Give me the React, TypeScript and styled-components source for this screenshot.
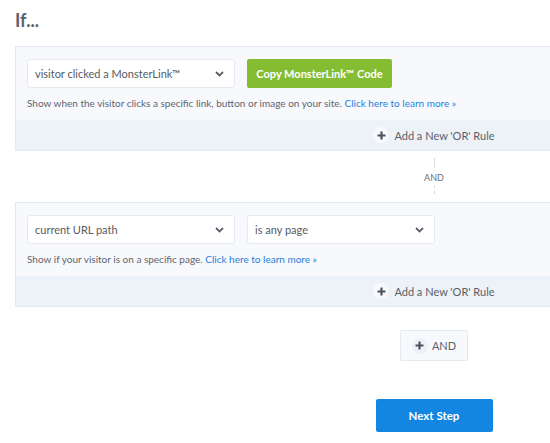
import { createGlobalStyle, styled } from 'styled-components';

const Global = createGlobalStyle`
  body {
    margin: 0;
    background: #fff;
    font-family: Lato, "Open Sans", sans-serif;
  }
`

const Viewport = styled.div`
  width: 100%;
  overflow: hidden;
`

const Page = styled.div`
  width: 838px;
  padding: 9px 0 10px 15px;
`

const Title = styled.h2`
  margin: 0 0 15px;
  font-size: 18px;
  line-height: 22px;
  font-weight: 700;
  color: #5b616b;
`

const Card = styled.div`
  border: 1px solid #e4e9f1;
  background: #f7f9fd;
`

const CardBody = styled.div`
  padding: 12px 11px 11px;
`

const Row = styled.div`
  display: flex;
  gap: 12px;
`

const Select = styled.div<{ $w: number }>`
  box-sizing: border-box;
  width: ${p => p.$w}px;
  height: 29px;
  background: #fff;
  border: 1px solid #e6eaf0;
  border-radius: 3px;
  display: flex;
  align-items: center;
  justify-content: space-between;
  padding: 0 10px 0 7px;
  font-size: 11px;
  color: #555b64;
`

const Chevron = () => (
  <svg width="9" height="6" viewBox="0 0 9 6">
    <path d="M1 1l3.5 3.5L8 1" stroke="#5b616b" strokeWidth="1.8" fill="none" />
  </svg>
)

const GreenButton = styled.button`
  height: 29px;
  width: 145px;
  border: 0;
  border-radius: 2px;
  background: #84bd32;
  color: #fff;
  font-family: inherit;
  font-size: 11px;
  font-weight: 700;
  padding: 0;
`

const Help = styled.p`
  margin: 9px 0 0;
  font-size: 10px;
  line-height: 12px;
  color: #5f656e;
`

const HelpLink = styled.a`
  color: #1d7fdc;
  text-decoration: none;
`

const Band = styled.div`
  height: 30px;
  background: #edf1f8;
  display: flex;
  align-items: center;
  justify-content: center;
  gap: 5px;
  font-size: 11px;
  color: #5b616b;
`

const PlusDot = styled.span<{ $bg?: string }>`
  width: 16px;
  height: 16px;
  border-radius: 50%;
  background: ${p => p.$bg || '#f7f9fd'};
  display: inline-flex;
  align-items: center;
  justify-content: center;
`

const Plus = () => (
  <svg width="9" height="9" viewBox="0 0 9 9">
    <path d="M4.5 0.5v8M0.5 4.5h8" stroke="#4e545d" strokeWidth="2.2" />
  </svg>
)

const Connector = styled.div`
  height: 51px;
  padding: 7px 0 8px;
  box-sizing: border-box;
  display: flex;
  flex-direction: column;
  align-items: center;
  justify-content: space-between;
`

const Dash = styled.span`
  flex: 1;
  border-left: 1px dashed #d8dde5;
`

const ConnectorLabel = styled.span`
  font-size: 9px;
  line-height: 14px;
  color: #6a7079;
  margin-top: 3px;
`

const Center = styled.div<{ $mt: number }>`
  display: flex;
  justify-content: center;
  margin-top: ${p => p.$mt}px;
`

const AndButton = styled.button`
  width: 68px;
  height: 31px;
  background: #f7f9fd;
  border: 1px solid #e6eaf0;
  border-radius: 2px;
  display: flex;
  align-items: center;
  justify-content: center;
  gap: 4px;
  font-family: inherit;
  font-size: 11px;
  color: #5b616b;
  padding: 0;
`

const NextButton = styled.button`
  width: 117px;
  height: 33px;
  border: 0;
  border-radius: 2px;
  background: #1286e0;
  color: #fff;
  font-family: inherit;
  font-size: 11.5px;
  font-weight: 700;
  padding: 0;
`

function RuleCard(props: { children: React.ReactNode; help: string }) {
  return (
    <Card>
      <CardBody>
        <Row>{props.children}</Row>
        <Help>
          {props.help} <HelpLink href="#">Click here to learn more »</HelpLink>
        </Help>
      </CardBody>
      <Band>
        <PlusDot><Plus /></PlusDot>
        Add a New 'OR' Rule
      </Band>
    </Card>
  )
}

export default function App() {
  return (
    <Viewport>
      <Global />
      <Page>
        <Title>If...</Title>
        <RuleCard help="Show when the visitor clicks a specific link, button or image on your site.">
          <Select $w={208}>visitor clicked a MonsterLink™<Chevron /></Select>
          <GreenButton>Copy MonsterLink™ Code</GreenButton>
        </RuleCard>
        <Connector>
          <Dash />
          <ConnectorLabel>AND</ConnectorLabel>
          <Dash />
        </Connector>
        <RuleCard help="Show if your visitor is on a specific page.">
          <Select $w={208}>current URL path<Chevron /></Select>
          <Select $w={188}>is any page<Chevron /></Select>
        </RuleCard>
        <Center $mt={23}>
          <AndButton>
            <PlusDot $bg="#edf1f8"><Plus /></PlusDot>
            AND
          </AndButton>
        </Center>
        <Center $mt={38}>
          <NextButton>Next Step</NextButton>
        </Center>
      </Page>
    </Viewport>
  )
}
